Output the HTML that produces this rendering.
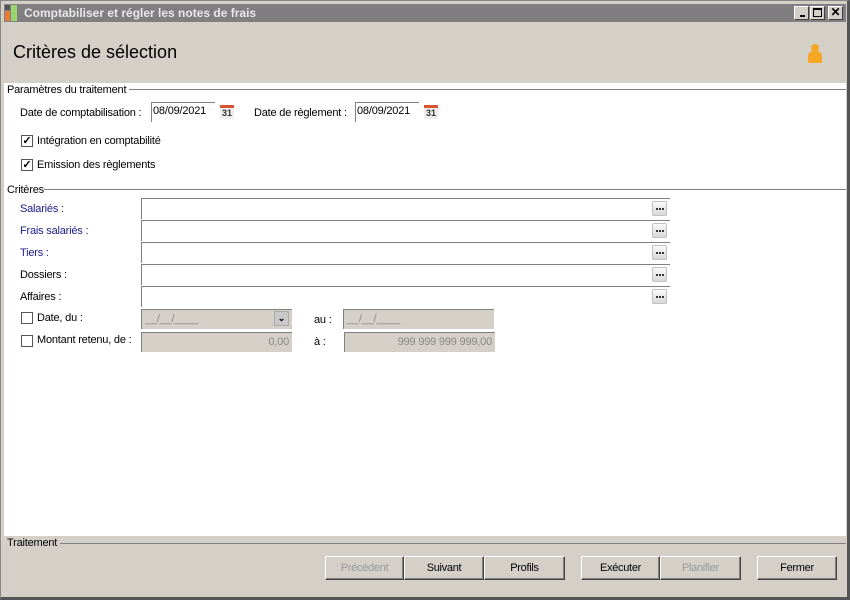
<!DOCTYPE html>
<html><head><meta charset="utf-8"><style>
*{margin:0;padding:0;box-sizing:border-box}
body{width:850px;height:600px;background:#d4d0c8;font-family:"Liberation Sans",sans-serif;font-size:11px;color:#000;position:relative;overflow:hidden}
.a{position:absolute}
.t{position:absolute;white-space:nowrap;font-size:11px;letter-spacing:-0.2px}
.inp{position:absolute;background:#fff;border-top:1px solid #808080;border-left:1px solid #808080;height:21px}
.dis{position:absolute;background:#d4d0c8;border-top:1px solid #808080;border-left:1px solid #808080;height:20px;color:#888;font-size:11px;padding:3px 3px;letter-spacing:-0.2px}
.dots{position:absolute;width:15px;height:15px;background:linear-gradient(#fafafa,#d8d8d8);border:1px solid #c0c0c0;border-radius:2px}
.dots::after{content:"";position:absolute;left:3px;top:6px;width:2px;height:2px;background:#333;box-shadow:3px 0 0 #333,6px 0 0 #333}
.cb{position:absolute;width:12px;height:12px;border:1px solid #555;background:#fff;font-size:11px;line-height:10px;text-align:center;font-weight:bold}
.btn{position:absolute;top:556px;height:24px;background:#d4d0c8;border:1px solid;border-color:#fff #404040 #404040 #fff;box-shadow:inset -1px -1px 0 #808080;text-align:center;line-height:22px;font-size:11px;letter-spacing:-0.3px}
.cal{position:absolute;width:14px;height:14px;background:#eee;border-top:3px solid #d9532c;font-size:9px;font-weight:bold;color:#333;text-align:center;line-height:11px}
.blue{color:#1a1a8c}
</style></head><body>
<div class="a" style="left:0;top:0;width:850px;height:600px;border:1px solid #888;border-right:3px solid #555;border-bottom:3px solid #555"></div>
<div class="a" style="left:4px;top:4px;width:842px;height:18px;background:#807e80"></div>
<div class="a" style="left:5px;top:5px;width:5px;height:5px;background:#555"></div>
<div class="a" style="left:5px;top:11px;width:5px;height:10px;background:#e87b3a"></div>
<div class="a" style="left:11px;top:5px;width:6px;height:16px;background:#9bd46a"></div>
<div class="t" style="left:24px;top:6px;color:#e8e8e8;font-weight:bold;font-size:12px;letter-spacing:0">Comptabiliser et régler les notes de frais</div>
<div class="a" style="left:794px;top:6px;width:15px;height:14px;background:#d4d0c8;border:1px solid;border-color:#fff #404040 #404040 #fff"><div class="a" style="left:5px;top:8px;width:5px;height:2px;background:#000"></div></div>
<div class="a" style="left:810px;top:6px;width:15px;height:14px;background:#d4d0c8;border:1px solid;border-color:#fff #404040 #404040 #fff"><div class="a" style="left:2px;top:1px;width:9px;height:9px;border:1px solid #000;border-top-width:2px"></div></div>
<div class="a" style="left:828px;top:6px;width:15px;height:14px;background:#d4d0c8;border:1px solid;border-color:#fff #404040 #404040 #fff;font-size:12px;line-height:11px;text-align:center;font-weight:bold">✕</div>
<div class="t" style="left:13px;top:42px;font-size:18px;letter-spacing:0">Critères de sélection</div>
<div class="a" style="left:811px;top:44px;width:8px;height:8px;border-radius:50%;background:#f5a623"></div>
<div class="a" style="left:808px;top:51px;width:14px;height:12px;border-radius:5px 5px 2px 2px;background:#f5a623"></div>
<div class="a" style="left:4px;top:83px;width:842px;height:453px;background:#fff"></div>
<div class="t" style="left:7px;top:84px">Paramètres du traitement</div>
<div class="a" style="left:129px;top:89px;width:717px;height:1px;background:#808080"></div>
<div class="t" style="left:20px;top:107px">Date de comptabilisation :</div>
<div class="inp" style="left:151px;top:102px;width:64px;height:20px"></div>
<div class="t" style="left:153px;top:105px">08/09/2021</div>
<div class="cal" style="left:220px;top:105px">31</div>
<div class="t" style="left:254px;top:107px">Date de règlement :</div>
<div class="inp" style="left:355px;top:102px;width:64px;height:20px"></div>
<div class="t" style="left:357px;top:105px">08/09/2021</div>
<div class="cal" style="left:424px;top:105px">31</div>
<div class="cb" style="left:21px;top:135px">✓</div>
<div class="t" style="left:37px;top:135px">Intégration en comptabilité</div>
<div class="cb" style="left:21px;top:159px">✓</div>
<div class="t" style="left:37px;top:159px">Emission des règlements</div>
<div class="t" style="left:7px;top:184px">Critères</div>
<div class="a" style="left:44px;top:189px;width:802px;height:1px;background:#808080"></div>
<div class="t blue" style="left:20px;top:203px">Salariés :</div>
<div class="t blue" style="left:20px;top:225px">Frais salariés :</div>
<div class="t blue" style="left:20px;top:247px">Tiers :</div>
<div class="t" style="left:20px;top:269px">Dossiers :</div>
<div class="t" style="left:20px;top:291px">Affaires :</div>
<div class="inp" style="left:141px;top:198px;width:529px"></div>
<div class="inp" style="left:141px;top:220px;width:529px"></div>
<div class="inp" style="left:141px;top:242px;width:529px"></div>
<div class="inp" style="left:141px;top:264px;width:529px"></div>
<div class="inp" style="left:141px;top:286px;width:529px"></div>
<div class="dots" style="left:652px;top:201px"></div>
<div class="dots" style="left:652px;top:223px"></div>
<div class="dots" style="left:652px;top:245px"></div>
<div class="dots" style="left:652px;top:267px"></div>
<div class="dots" style="left:652px;top:289px"></div>
<div class="cb" style="left:21px;top:312px"></div>
<div class="t" style="left:37px;top:312px">Date, du :</div>
<div class="dis" style="left:141px;top:309px;width:151px">__/__/____</div>
<div class="a" style="left:274px;top:311px;width:15px;height:15px;background:#c8c8c8;border:1px solid #aaa;font-size:9px;text-align:center;line-height:13px;font-weight:bold">⌄</div>
<div class="t" style="left:314px;top:314px">au :</div>
<div class="dis" style="left:343px;top:309px;width:151px">__/__/____</div>
<div class="cb" style="left:21px;top:335px"></div>
<div class="t" style="left:37px;top:334px">Montant retenu, de :</div>
<div class="dis" style="left:141px;top:332px;width:151px;text-align:right">0,00</div>
<div class="t" style="left:314px;top:336px">à :</div>
<div class="dis" style="left:344px;top:332px;width:151px;text-align:right">999 999 999 999,00</div>
<div class="t" style="left:7px;top:537px">Traitement</div>
<div class="a" style="left:60px;top:543px;width:786px;height:1px;background:#808080"></div>
<div class="btn" style="left:325px;width:79px;color:#999">Précédent</div>
<div class="btn" style="left:404px;width:80px">Suivant</div>
<div class="btn" style="left:484px;width:81px">Profils</div>
<div class="btn" style="left:581px;width:79px">Exécuter</div>
<div class="btn" style="left:660px;width:81px;color:#999">Planifier</div>
<div class="btn" style="left:757px;width:80px">Fermer</div>
</body></html>
